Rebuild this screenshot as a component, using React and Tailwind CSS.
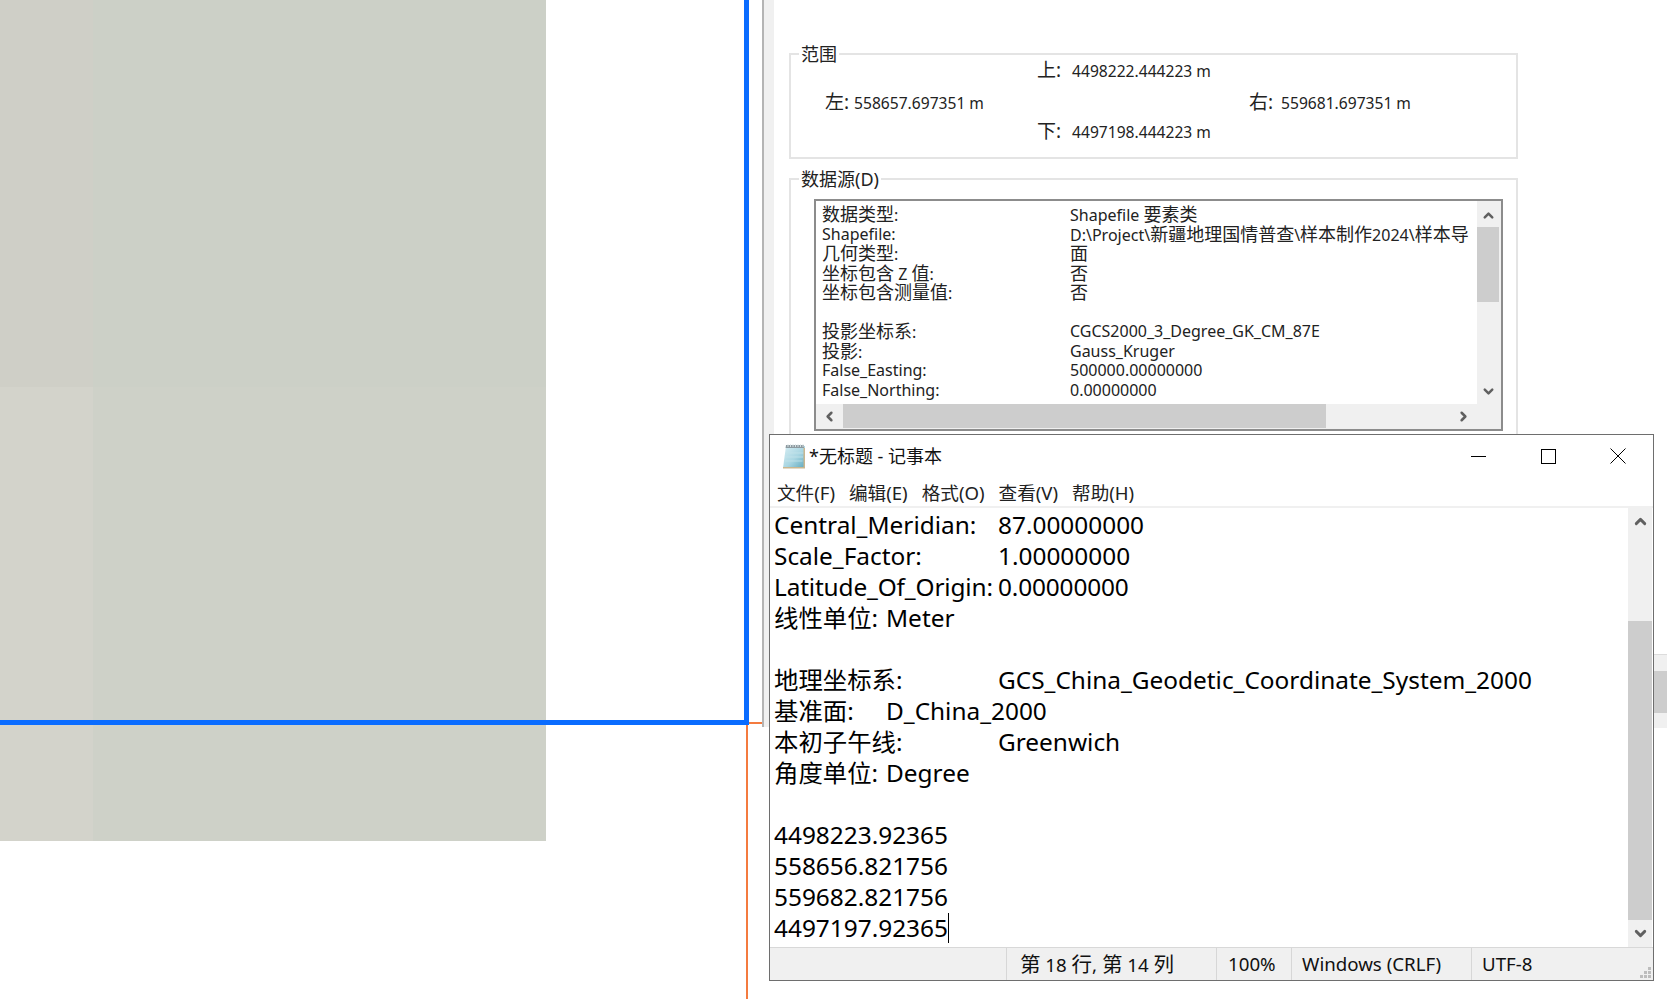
import { ChevronUp, ChevronDown, ChevronLeft, ChevronRight } from 'lucide-react';

var SHEET_ROWS = [
  ['数据类型:', 'Shapefile 要素类'],
  ['Shapefile:', 'D:\\Project\\新疆地理国情普查\\样本制作2024\\样本导'],
  ['几何类型:', '面'],
  ['坐标包含 Z 值:', '否'],
  ['坐标包含测量值:', '否'],
  ['', ''],
  ['投影坐标系:', 'CGCS2000_3_Degree_GK_CM_87E'],
  ['投影:', 'Gauss_Kruger'],
  ['False_Easting:', '500000.00000000'],
  ['False_Northing:', '0.00000000'],
];

var NOTE_LINES = [
  'Central_Meridian:\t87.00000000',
  'Scale_Factor:\t1.00000000',
  'Latitude_Of_Origin:\t0.00000000',
  '线性单位:\tMeter',
  '',
  '地理坐标系:\tGCS_China_Geodetic_Coordinate_System_2000',
  '基准面:\tD_China_2000',
  '本初子午线:\tGreenwich',
  '角度单位:\tDegree',
  '',
  '4498223.92365',
  '558656.821756',
  '559682.821756',
];

var MENUS = ['文件(F)', '编辑(E)', '格式(O)', '查看(V)', '帮助(H)'];

// the source font draws hanzi larger than latin, so wrap the hanzi runs
function Mixed(props) {
  var parts = props.text.split(/([\u4e00-\u9fff]+)/);
  return parts.map(function(part, index) {
    if (index % 2 === 1) return <span key={index} className={props.cjk}>{part}</span>;
    return part;
  });
}

function Extent(props) {
  return (
    <div className="flex items-baseline whitespace-pre">
      <span className="text-[19px]">{props.label}</span>
      <span className={props.gap}>{props.value} m</span>
    </div>
  );
}

function PropertiesDialog() {
  return (
    <div className="absolute left-[762px] top-0 right-0 h-[727px] bg-white border-l-2 border-[#b4b4b4] font-['Noto_Sans','Noto_Sans_CJK_SC',sans-serif] text-[#222] text-[15.6px]">
      <div className="h-full border-l-[10px] border-[#f0f0f0] pt-[53px] pl-[15px] w-[760px]">
        <div className="relative h-[106px] w-[729px] border-2 border-[#e4e4e4]">
          <span className="absolute left-[8px] -top-[13px] bg-white px-[2px] text-[18px] leading-[24px]">范围</span>
          <div className="grid grid-cols-[212px_212px_auto] grid-rows-[32px_29px_30px] h-full pt-[1px] pl-[34px]">
            <div />
            <Extent label="上:" gap="ml-[11px]" value="4498222.444223" />
            <div />
            <Extent label="左:" gap="ml-[5px]" value="558657.697351" />
            <div />
            <Extent label="右:" gap="ml-[8px]" value="559681.697351" />
            <div />
            <Extent label="下:" gap="ml-[11px]" value="4497198.444223" />
            <div />
          </div>
        </div>

        <div className="relative mt-[19px] h-[300px] w-[729px] border-2 border-b-0 border-[#e4e4e4]">
          <span className="absolute left-[8px] -top-[13px] bg-white px-[2px] text-[18px] leading-[24px]">数据源(D)</span>
          <div className="absolute left-[23px] top-[19px] w-[689px] h-[232px] border-2 border-[#8c8c8c] bg-[#f0f0f0] pr-[2px] pb-[1px]">
            <div className="flex h-full">
              <div className="flex flex-col flex-1 min-w-0">
                <div className="flex-1 overflow-hidden bg-white pt-[4px] pl-[6px] text-[16px] leading-[19.5px] whitespace-pre">
                  {SHEET_ROWS.map(function(row, index) {
                    return (
                      <div key={index} className="grid grid-cols-[248px_1fr] h-[19.5px]">
                        <span><Mixed text={row[0]} cjk="text-[18px]" /></span>
                        <span><Mixed text={row[1]} cjk="text-[18px]" /></span>
                      </div>
                    );
                  })}
                </div>
                <div className="flex items-center h-[24px] bg-[#f0f0f0]">
                  <div className="flex justify-center w-[27px]">
                    <ChevronLeft size={15} strokeWidth={4} className="text-[#606060]" />
                  </div>
                  <div className="w-[483px] h-full bg-[#cdcdcd]" />
                  <div className="flex-1 flex justify-end pr-[6px]">
                    <ChevronRight size={15} strokeWidth={4} className="text-[#606060]" />
                  </div>
                </div>
              </div>
              <div className="flex flex-col w-[22px] bg-[#f0f0f0]">
                <div className="flex justify-center items-center h-[26px] pt-[3px]">
                  <ChevronUp size={15} strokeWidth={4} className="text-[#606060]" />
                </div>
                <div className="h-[75px] bg-[#cdcdcd]" />
                <div className="flex-1" />
                <div className="flex justify-center items-center h-[52px] pb-[22px]">
                  <ChevronDown size={15} strokeWidth={4} className="text-[#606060]" />
                </div>
              </div>
            </div>
          </div>
        </div>
      </div>
      {/* another window's scrollbar peeking out past the notepad */}
      <div className="absolute right-0 top-[654px] w-[13px] flex flex-col">
        <div className="h-[17px] bg-[#f0f0f0] border-t border-[#dcdcdc]" />
        <div className="h-[42px] bg-[#cdcdcd]" />
        <div className="h-[15px] bg-[#f0f0f0]" />
      </div>
    </div>
  );
}

function NotepadIcon() {
  return (
    <svg width="24" height="26" viewBox="0 0 24 26" className="shrink-0">
      <defs>
        <linearGradient id="padFill" x1="0" y1="0" x2="1" y2="1">
          <stop offset="0" stopColor="#d8eef4" />
          <stop offset="0.55" stopColor="#a9d6e2" />
          <stop offset="1" stopColor="#5fa8bd" />
        </linearGradient>
      </defs>
      <path d="M4 3h19v22H1z" fill="url(#padFill)" />
      <path d="M3.500 10h18M3 14h18M2.500 18h18" stroke="#c4e3ea" strokeWidth="0.8" />
      <path d="M4 2h18v3H3.600z" fill="#8d9aa0" />
      <path d="M6 1v3M8.500 1v3M11 1v3M13.500 1v3M16 1v3M18.500 1v3M21 1v3" stroke="#dfe8ea" strokeWidth="0.9" />
      <path d="M21.500 5v19H1v1.500h22V5z" fill="#c9b68f" />
    </svg>
  );
}

function Notepad() {
  return (
    <div className="absolute left-[769px] top-[434px] w-[885px] h-[547px] flex flex-col bg-white border border-[#6e6e6e] text-black font-['Noto_Sans','Noto_Sans_CJK_SC',sans-serif]">
      <div className="flex items-center h-[42px] shrink-0 pl-[12px]">
        <NotepadIcon />
        <span className="ml-[3px] text-[18px] text-[#111]">*无标题 - 记事本</span>
        <div className="ml-auto flex items-center">
          <div className="flex justify-center w-[70px]">
            <div className="w-[15px] h-px bg-black" />
          </div>
          <div className="flex justify-center w-[70px]">
            <div className="w-[15px] h-[15px] border border-black" />
          </div>
          <div className="flex justify-center w-[70px]">
            <svg width="16" height="16" viewBox="0 0 16 16">
              <path d="M.5.5l15 15M15.500.5l-15 15" stroke="#000" strokeWidth="1" fill="none" />
            </svg>
          </div>
        </div>
      </div>
      <div className="flex items-center gap-[14px] h-[31px] shrink-0 pl-[7px] pt-[2px] text-[18.6px] text-[#222] border-b-2 border-[#f0f0f0]">
        {MENUS.map(function(menu) {
          return <span key={menu}>{menu}</span>;
        })}
      </div>
      <div className="flex flex-1 min-h-0">
        <div className="flex-1 min-w-0 pl-[4px] pt-[1px] text-[24.4px] leading-[31px] whitespace-pre [tab-size:112px] overflow-hidden">
          {NOTE_LINES.map(function(line, index) {
            // this label nearly fills its tab column, tighten it so the tab stays there
            return <div key={index} className={index === 2 ? 'h-[31px] tracking-[-0.15px]' : 'h-[31px]'}>{line}</div>;
          })}
          <div className="flex items-center h-[31px]">
            <span>4497197.92365</span>
            <span className="w-px h-[30px] bg-black" />
          </div>
        </div>
        <div className="flex flex-col w-[24px] mr-px bg-[#f0f0f0]">
          <div className="flex justify-center items-center h-[26px]">
            <ChevronUp size={17} strokeWidth={4} className="text-[#606060]" />
          </div>
          <div className="h-[87px]" />
          <div className="flex-1 bg-[#cdcdcd]" />
          <div className="flex justify-center items-center h-[27px]">
            <ChevronDown size={17} strokeWidth={4} className="text-[#606060]" />
          </div>
        </div>
      </div>
      <div className="flex items-center h-[33px] shrink-0 bg-[#f0f0f0] border-t border-[#d8d8d8] text-[18.7px] text-[#111] whitespace-nowrap">
        <div className="w-[237px] h-full border-r border-[#d7d7d7]" />
        <div className="w-[210px] h-full flex items-center pl-[13px] border-r border-[#d7d7d7]">
          <span className="whitespace-pre"><Mixed text="第 18 行, 第 14 列" cjk="text-[20.5px]" /></span>
        </div>
        <div className="w-[75px] h-full flex items-center pl-[11px] border-r border-[#d7d7d7]">100%</div>
        <div className="w-[180px] h-full flex items-center pl-[10px] border-r border-[#d7d7d7]">Windows (CRLF)</div>
        <div className="flex-1 h-full flex items-center pl-[10px]">UTF-8</div>
        <svg width="12" height="12" viewBox="0 0 12 12" className="self-end mr-px mb-px">
          <path d="M8 0h3v3H8zM4 4h3v3H4zM8 4h3v3H8zM0 8h3v3H0zM4 8h3v3H4zM8 8h3v3H8z" fill="#bdbdbd" />
        </svg>
      </div>
    </div>
  );
}

export default function App() {
  return (
    <div className="relative w-[1667px] h-[999px] overflow-hidden bg-white">
      {/* map canvas */}
      <div className="absolute left-0 top-0 w-[546px] h-[841px] grid grid-cols-[93px_1fr] grid-rows-[387px_1fr]">
        <div className="bg-[#cfcfc7]" />
        <div className="bg-[#ccd0c7]" />
        <div className="bg-[#d3d3cb]" />
        <div className="bg-[#ced1c8]" />
      </div>
      <div className="absolute left-[746px] top-[722px] w-[17px] h-[2px] bg-[#f47b3f]" />
      <div className="absolute left-[746px] top-[722px] w-[2px] h-[277px] bg-[#f47b3f]" />
      <div className="absolute left-0 top-[720px] w-[749px] h-[5px] bg-[#0a6cff]" />
      <div className="absolute left-[744px] top-0 w-[5px] h-[725px] bg-[#0a6cff]" />

      <PropertiesDialog />
      <Notepad />
    </div>
  );
}
